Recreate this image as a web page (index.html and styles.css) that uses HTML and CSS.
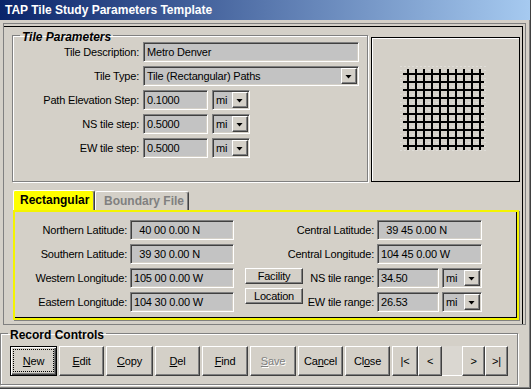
FILE: index.html
```html
<!DOCTYPE html>
<html>
<head>
<meta charset="utf-8">
<title>TAP Tile Study Parameters Template</title>
<link rel="stylesheet" href="styles.css">
</head>
<body>
<div class="window">
  <div class="titlebar">TAP Tile Study Parameters Template</div>
  <div class="main">
    <div class="top-row">
      <fieldset class="group tile-params">
        <legend>Tile Parameters</legend>
        <div class="form">
          <label>Tile Description:</label>
          <div class="field wide">Metro Denver</div>
          <label>Tile Type:</label>
          <div class="combo wide"><span class="val">Tile (Rectangular) Paths</span><span class="drop"></span></div>
          <label>Path Elevation Step:</label>
          <div class="pair"><div class="field short">0.1000</div><div class="combo unit"><span class="val">mi</span><span class="drop"></span></div></div>
          <label>NS tile step:</label>
          <div class="pair"><div class="field short">0.5000</div><div class="combo unit"><span class="val">mi</span><span class="drop"></span></div></div>
          <label>EW tile step:</label>
          <div class="pair"><div class="field short">0.5000</div><div class="combo unit"><span class="val">mi</span><span class="drop"></span></div></div>
        </div>
      </fieldset>
      <div class="preview">
        <svg class="grid" width="147" height="143" viewBox="0 0 147 143">
          <defs>
            <pattern id="dots" width="4" height="4" patternUnits="userSpaceOnUse">
              <rect width="2" height="1" fill="#e0ded9"/>
            </pattern>
          </defs>
          <rect x="28" y="26" width="88" height="90" fill="url(#dots)"/>
          <path stroke="#000" stroke-width="2" fill="none" d="M36 31V112M44 31V112M52 31V112M60 31V112M68 31V112M76 31V112M84 31V112M92 31V112M100 31V112M108 31V112M31 36H112M31 44H112M31 52H112M31 60H112M31 68H112M31 76H112M31 84H112M31 92H112M31 100H112M31 108H112"/>
        </svg>
      </div>
    </div>
    <div class="tabs">
      <div class="tab active">Rectangular</div>
      <div class="tab inactive">Boundary File</div>
    </div>
    <div class="panel">
      <label class="l1">Northern Latitude:</label>
      <div class="field">&ensp;40 00 0.00 N</div>
      <label class="l2">Central Latitude:</label>
      <div class="field">&ensp;39 45 0.00 N</div>

      <label class="l1">Southern Latitude:</label>
      <div class="field">&ensp;39 30 0.00 N</div>
      <label class="l2">Central Longitude:</label>
      <div class="field">104 45 0.00 W</div>

      <label class="l1">Western Longitude:</label>
      <div class="field">105 00 0.00 W</div>
      <div class="side-buttons">
        <div class="btn small">Facility</div>
        <div class="btn small">Location</div>
      </div>
      <label class="l3">NS tile range:</label>
      <div class="pair"><div class="field range">34.50</div><div class="combo unit2"><span class="val">mi</span><span class="drop"></span></div></div>

      <label class="l1">Eastern Longitude:</label>
      <div class="field">104 30 0.00 W</div>
      <label class="l3">EW tile range:</label>
      <div class="pair"><div class="field range">26.53</div><div class="combo unit2"><span class="val">mi</span><span class="drop"></span></div></div>
    </div>
  </div>
  <fieldset class="group record">
    <legend>Record Controls</legend>
    <div class="buttons">
      <div class="btn focused w47"><span class="focus"><u>N</u>ew</span></div>
      <div class="btn w45"><u>E</u>dit</div>
      <div class="btn w47"><u>C</u>opy</div>
      <div class="btn w45"><u>D</u>el</div>
      <div class="btn w46"><u>F</u>ind</div>
      <div class="btn w46 disabled"><u>S</u>ave</div>
      <div class="btn w45">Ca<u>n</u>cel</div>
      <div class="btn w45">Cl<u>o</u>se</div>
      <div class="nav">
        <div class="btn n26">|&lt;</div>
        <div class="btn n24">&lt;</div>
        <div class="navfield"></div>
        <div class="btn n23">&gt;</div>
        <div class="btn n23">&gt;|</div>
      </div>
    </div>
  </fieldset>
</div>
</body>
</html>
```
FILE: styles.css
```css
* { box-sizing: border-box; }
html, body { margin: 0; padding: 0; }
body {
  width: 531px;
  height: 389px;
  overflow: hidden;
  background: #d4d0c8;
  font-family: "Liberation Sans", Arial, sans-serif;
  font-size: 11px;
  letter-spacing: -0.2px;
  color: #000;
}
.window {
  width: 531px;
  height: 389px;
  border-right: 1px solid #404040;
  border-bottom: 1px solid #404040;
  box-shadow: inset -1px -1px 0 #808080;
}
.titlebar {
  height: 20px;
  background: linear-gradient(90deg, #0a246a 0%, #a6caf0 100%);
  color: #fff;
  font-weight: bold;
  font-size: 12px;
  letter-spacing: 0;
  line-height: 20px;
  padding-left: 5px;
}
.main {
  margin: 3px 0 0 3px;
  width: 523px;
  height: 302px;
  border: 1px solid #808080;
  box-shadow: inset -2px 2px 0 #d4d0c8, inset -3px 3px 0 #000;
  padding: 3px 5px 0 8px;
}
.top-row {
  display: flex;
  gap: 3px;
  align-items: flex-start;
}
fieldset.group {
  margin: 0;
  padding: 0;
  min-width: 0;
  border: 1px solid #808080;
  box-shadow: inset 1px 1px 0 #fff, 1px 1px 0 #fff;
}
fieldset.group legend {
  padding: 4px 2px 0;
  margin-left: 7px;
  font-weight: bold;
  font-size: 12px;
  line-height: 12px;
  letter-spacing: 0;
}
.tile-params {
  width: 356px;
  height: 155px;
}
.tile-params legend { font-style: italic; }
.form {
  margin-top: -1px;
  display: grid;
  grid-template-columns: 126px auto;
  grid-auto-rows: 20px;
  column-gap: 4px;
  row-gap: 4px;
}
label {
  text-align: right;
  white-space: nowrap;
  align-self: center;
}
.field, .combo {
  height: 20px;
  background: #c3c3c3;
  border: 1px solid;
  border-color: #808080 #fff #fff #808080;
  box-shadow: inset 1px 1px 0 #404040, inset -1px -1px 0 #d4d0c8;
  padding-left: 3px;
  line-height: 18px;
  white-space: nowrap;
  overflow: hidden;
}
.combo {
  display: flex;
  align-items: center;
  padding: 1px 1px 1px 3px;
}
.combo .val { flex: 1; line-height: 16px; }
.drop {
  width: 16px;
  height: 16px;
  flex: none;
  background: #d4d0c8;
  border: 1px solid;
  border-color: #fff #404040 #404040 #fff;
  box-shadow: inset -1px -1px 0 #808080;
  display: flex;
  align-items: center;
  justify-content: center;
}
.drop::after {
  content: "";
  width: 7px;
  height: 4px;
  background: #000;
  clip-path: polygon(0 0, 100% 0, 50% 100%);
  margin: 1px 1px 0 0;
}
.wide { width: 216px; }
.pair { display: flex; gap: 4px; }
.short { width: 65px; }
.unit { width: 38px; }
.preview {
  margin-top: 10px;
  width: 149px;
  height: 145px;
  border: 1px solid #000;
  box-shadow: inset 1px 1px 0 #fff;
}
.grid { display: block; }
.tabs {
  margin: 8px 0 0 1px;
  height: 20px;
  display: flex;
  align-items: flex-end;
}
.tab {
  font-weight: bold;
  font-size: 12px;
  letter-spacing: 0;
  border-top: 1px solid #fff;
  border-left: 1px solid #fff;
  border-right: 1px solid #404040;
  border-radius: 2px 3px 0 0;
  box-shadow: inset -1px 0 0 #808080;
  white-space: nowrap;
}
.tab.active {
  width: 82px;
  height: 20px;
  background: #ffff00;
  padding-left: 6px;
  line-height: 18px;
}
.tab.inactive {
  width: 94px;
  height: 19px;
  color: #808080;
  padding-left: 8px;
  line-height: 18px;
}
.panel {
  margin-left: 1px;
  width: 506px;
  height: 110px;
  border: 2px solid #f4f400;
  box-shadow: inset -1px -1px 0 #000, 1px 1px 0 #808080;
  padding-top: 8px;
  display: grid;
  grid-template-columns: 115px 104px 11px 58px 74px 105px;
  grid-auto-rows: 20px;
  row-gap: 4px;
}
.panel label { padding-right: 3px; }
.panel .l1 { grid-column: 1; }
.panel .l2 { grid-column: 3 / 6; }
.panel .l3 { grid-column: 5; }
.side-buttons {
  grid-column: 4;
  grid-row: 3 / span 2;
  display: flex;
  flex-direction: column;
  gap: 4px;
}
.range { width: 62px; }
.unit2 { width: 40px; }
.panel .pair { gap: 3px; }
.btn {
  background: #d4d0c8;
  border: 1px solid;
  border-color: #fff #404040 #404040 #fff;
  box-shadow: inset -1px -1px 0 #808080;
  display: flex;
  align-items: center;
  justify-content: center;
  white-space: nowrap;
}
.btn.small {
  height: 16px;
  line-height: 14px;
}
.record {
  margin-left: 5px;
  width: 518px;
  height: 60px;
}
.buttons {
  padding: 5px 0 0 9px;
  display: flex;
  gap: 2px;
}
.buttons .btn { height: 30px; }
.w45 { width: 45px; }
.w46 { width: 46px; }
.w47 { width: 47px; }
.btn.focused {
  border: 1px solid #000;
  box-shadow: inset 1px 1px 0 #fff, inset -1px -1px 0 #404040, inset -2px -2px 0 #808080;
  padding: 2px 2px 3px 2px;
  align-items: stretch;
}
.focus {
  flex: 1;
  border: 1px dotted #000;
  display: flex;
  align-items: center;
  justify-content: center;
}
.btn.disabled {
  color: #808080;
  text-shadow: 1px 1px 0 #fff;
}
.nav { display: flex; }
.n26 { width: 26px; }
.n24 { width: 24px; }
.n23 { width: 23px; }
.navfield {
  width: 20px;
  height: 30px;
  background: #dad7d1;
  border-bottom: 1px solid #fff;
}
```
